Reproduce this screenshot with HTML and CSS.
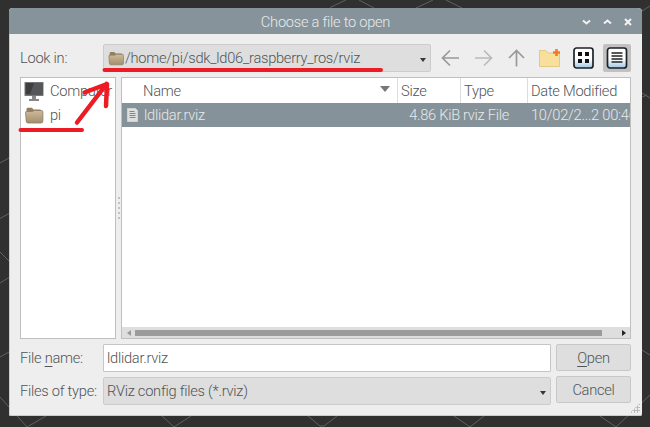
FILE: index.html
```html
<!DOCTYPE html>
<html lang="en">
<head>
<meta charset="utf-8">
<title>Choose a file to open</title>
<link rel="stylesheet" href="styles.css">
</head>
<body>
<svg class="backdrop" width="650" height="427" viewBox="0 0 650 427">
  <path d="M330 7.500 346 0M359 0 374 8M416 8 433 0M446 0 462 8M0 163 9 158M0 218.500 9 213.500M0 252 9 261M0 283 9 277.500M0 357 9 352M0 397 27 427 46 416M162 416 174 427 191 416M308 416 320 426H324L337 416M454 416 470 427 484 416M600 416 616 427 650 395M642 350 650 355M642 93 650 98M642 97 647 95M642 11 650 6"/>
</svg>
<main class="dialog">
  <header class="titlebar">
    <h1>Choose a file to open</h1>
    <svg class="winbuttons" width="52" height="10" viewBox="0 0 52 10">
      <path d="M2 3.500 5.500 6.500 9 3.500M23 6.500 26.500 3.500 30 6.500M44 2 50 8M50 2 44 8"/>
    </svg>
  </header>
  <section class="content">
    <div class="lookrow">
      <label class="caption">Look in:</label>
      <div class="combo path">
        <svg width="16" height="15" viewBox="0 0 19 17"><use href="#folder"/></svg>
        <span>/home/pi/sdk_ld06_raspberry_ros/rviz</span><i class="caret"></i>
      </div>
      <div class="tools">
        <svg class="arrow" width="19" height="18" viewBox="0 0 19 18"><path d="M18 9H1M9 1.500 1.500 9 9 16.500"/></svg>
        <svg class="arrow dim" width="19" height="18" viewBox="0 0 19 18"><path d="M1 9H18M10 1.500 17.500 9 10 16.500"/></svg>
        <svg class="arrow up" width="17" height="18" viewBox="0 0 17 18"><path d="M8.500 17.500V1.500M1 9 8.500 1.500 16 9"/></svg>
        <svg class="newfolder" width="22" height="20" viewBox="0 0 22 20"><path d="M.5 18.500V2.500H7L9 5H20.500V18.500Z" fill="#f8df9c" stroke="#e3c983"/><path d="M17.500 1V8M14 4.500H21" stroke="#f57b22" stroke-width="2.600"/></svg>
        <svg class="icons" width="21" height="22" viewBox="0 0 21 22"><use href="#tile"/><path d="M5 5H9V9H5ZM12 5H16V9H12ZM5 12H9V16H5ZM12 12H16V16H12Z" fill="#111"/></svg>
        <span class="pressed"><svg width="22" height="22" viewBox="0 0 21 22"><use href="#tile"/><path d="M5 6H16M5 9H16M5 12H16M5 15H16" stroke="#222" stroke-width="1.300"/></svg></span>
      </div>
    </div>
    <div class="panes">
      <nav class="places">
        <div class="place">
          <svg width="20" height="21" viewBox="0 0 20 21"><path d="M.5 1H19.500V15H.5Z" fill="#777"/><path d="M1.500 2H18.500V13.500H1.500Z" fill="#3d3e40"/><path d="M10 2H18.500V13.500H6Z" fill="#55575a"/><path d="M8 15H12V18H15V20H5V18H8Z" fill="#888"/></svg>
          <span>Computer</span>
        </div>
        <div class="place">
          <svg width="19" height="17" viewBox="0 0 19 17"><use href="#folder"/></svg>
          <span>pi</span>
        </div>
      </nav>
      <div class="splitter"><i></i></div>
      <div class="files">
        <div class="row head">
          <div class="name"><span>Name</span><i class="sort"></i></div>
          <div class="size">Size</div><div class="type">Type</div><div class="date">Date Modified</div>
        </div>
        <div class="row selected">
          <div class="name">
            <svg width="11" height="14" viewBox="0 0 11 14"><path d="M.5.5H8.500L10.500 2.500V13.500H.5Z" fill="#dedfdf" stroke="#cfd2d3"/><path d="M2.500 3.500H7.500M2.500 5.500H8.500M2.500 7.500H8.500M2.500 9.500H8.500" stroke="#7e888c"/></svg>
            <span>ldlidar.rviz</span>
          </div>
          <div class="size">4.86 KiB</div><div class="type">rviz File</div><div class="date">10/02/2...2 00:46</div>
        </div>
        <div class="space"></div>
        <div class="scroll"><i class="left"></i><b></b><i class="right"></i></div>
      </div>
    </div>
    <div class="form">
      <div class="fields">
        <div class="field"><label class="caption">File <u>n</u>ame:</label><div class="input">ldlidar.rviz</div></div>
        <div class="field"><label class="caption">Files of type:</label><div class="combo filter"><span>RViz config files (*.rviz)</span><i class="caret"></i></div></div>
      </div>
      <div class="actions">
        <button><u>O</u>pen</button>
        <button>Cancel</button>
      </div>
    </div>
  </section>
  <i class="grip"></i>
</main>
<svg class="marks" width="650" height="427" viewBox="0 0 650 427">
  <defs>
    <linearGradient id="tan" x2="0" y2="1"><stop stop-color="#cebb9b"/><stop offset="1" stop-color="#a38e6c"/></linearGradient>
    <linearGradient id="blue" x2="0" y2="1"><stop offset=".55" stop-color="#fff"/><stop offset="1" stop-color="#9fc5e5"/></linearGradient>
    <g id="folder"><path d="M2 14V2Q2 .7 3.300.7H7.500L9 2.500H15.500Q17 2.500 17 4V13Z" fill="#927f60"/><path d="M1 5.500Q1 4.500 2 4.500H8L9.500 3.500H17Q18.400 3.500 18.400 5V14Q18.400 16 16.500 16H3.500Q1.800 16 1.700 14Z" fill="url(#tan)" stroke="#8f7c60" stroke-width=".8"/></g>
    <g id="tile"><rect x="1" y="1" width="19" height="20" rx="2.500" fill="url(#blue)" stroke="#1b2228" stroke-width="1.700"/></g>
  </defs>
  <path d="M104.500 70H381M20.500 130H82" stroke-width="4"/>
  <path d="M77 122.500 106.500 84M84.500 92.500 107 84 106 106" stroke-width="4.500"/>
</svg>
</body>
</html>
```
FILE: styles.css
```css
* { box-sizing: border-box; }
body {
  margin: 0; width: 650px; height: 427px; padding: 8px 8px 11px 9px; overflow: hidden;
  background: #303030; color: #505557;
  font: 300 14.67px/20px Roboto, "Liberation Sans", sans-serif;
  letter-spacing: -.27px;
}
.backdrop, .marks { position: absolute; left: 0; top: 0; pointer-events: none; }
.backdrop { fill: none; stroke: #606060; stroke-width: 1; }
.marks > path { fill: none; stroke: #ed1c24; stroke-linecap: round; stroke-linejoin: round; }
svg { display: block; flex: none; }
span { white-space: nowrap; }
u { text-decoration-thickness: 1px; text-underline-offset: 3px; }
.dialog {
  position: relative; width: 633px; height: 408px; background: #eee;
  border-radius: 4px 4px 2px 2px; overflow: hidden; box-shadow: inset 0 -1px #ccc, inset 1px 0 #ccc;
}
.titlebar { height: 26px; background: #87939a; display: flex; align-items: center; justify-content: flex-end; position: relative; padding: 2px 9px 0 0; }
h1 { position: absolute; inset: 4px 0 auto 0; margin: 0; text-align: center; font: inherit; color: #e6eaec; }
.winbuttons { fill: none; stroke: #f2f2f2; stroke-width: 2; }
.content { padding: 10px 11px 0; display: flex; flex-direction: column; }
.lookrow { height: 28px; display: flex; align-items: center; margin-bottom: 5px; }
.caption { width: 83px; flex: none; white-space: nowrap; }
.combo { background: #dedede; border: 1px solid #ccc; border-radius: 2px; height: 28px; display: flex; align-items: center; }
.path { width: 329px; padding: 0 4px; gap: 1px; }
.caret { width: 0; margin-left: auto; border: 3px solid transparent; border-top: 4px solid #34383a; border-bottom: 0; margin-top: 4px; }
.tools { flex: 1; display: flex; align-items: center; padding-left: 10px; }
.arrow { fill: none; stroke: #999; stroke-width: 1.7; margin-right: 14px; }
.dim { stroke: #bbb; }
.up { margin-left: 1px; margin-right: 14px; }
.newfolder { margin-right: 12px; }
.icons { margin-right: 9px; }
.pressed { width: 28px; height: 28px; display: grid; place-items: center; background: #c1c1c1; border-radius: 2px; }
.panes { display: flex; height: 262px; margin-bottom: 5px; }
.places { width: 96px; border: 1px solid #bfbfbf; background: #fff; padding: 1px 3px; }
.place { height: 24px; display: flex; align-items: center; }
.place svg { width: 20px; margin-right: 6px; }
.splitter { width: 5px; display: grid; place-items: center; }
.splitter i { width: 2px; height: 22px; background: repeating-linear-gradient(#c3c3c3 0 2px, transparent 2px 5px); }
.files { width: 510px; border: 1px solid #bfbfbf; background: #fff; display: flex; flex-direction: column; overflow: hidden; }
.row { display: grid; grid-template-columns: 275px 63px 67px 103px; height: 25px; line-height: 26px; }
.row > div { overflow: hidden; white-space: nowrap; padding-left: 4px; }
.head > div + div { border-left: 1px solid #ddd; }
.head > div + div { padding-left: 3px; }
.row .name { display: flex; align-items: center; padding-left: 21px; }
.sort { margin-left: auto; margin-right: 7px; margin-top: -3px; border: 5px solid transparent; border-top: 6px solid #777; border-bottom: 0; }
.selected { background: #859299; color: #e6e9ea; height: 24px; line-height: 24px; }
.row.selected .name { padding-left: 5px; gap: 6px; }
.selected .size { text-align: right; padding-right: 0; }
.row.selected .type { padding-left: 3px; }
.space { flex: 1; }
.scroll { height: 11px; background: #dedede; display: flex; align-items: center; padding: 0 4px 0 5px; }
.scroll b { width: 467px; height: 6px; background: #9b9b9b; margin-left: 4px; }
.scroll i { border: 3px solid transparent; }
.scroll .left { border-right: 4px solid #999; border-left: 0; }
.scroll .right { border-left: 4px solid #222; border-right: 0; margin-left: auto; }
.form { display: flex; gap: 5px; }
.fields { width: 531px; display: grid; gap: 5px; }
.field { display: flex; align-items: center; }
.field .input, .filter { flex: 1; height: 28px; padding: 0 4px 0 3px; }
.input { border: 1px solid #c6c6c6; background: #fff; line-height: 27px; border-radius: 1px; }
.actions { display: flex; flex-direction: column; gap: 5px; flex: 1; }
button { height: 27px; padding: 0; font: inherit; letter-spacing: inherit; color: inherit; background: #dedede; border: 1px solid #c8c8c8; border-radius: 2px; }
.grip { position: absolute; right: 2px; bottom: 3px; width: 10px; height: 10px; background: radial-gradient(circle, #bbb 1px, transparent 1.2px) 0 0 / 3px 3px; clip-path: polygon(100% 0, 100% 100%, 0 100%); }
```
